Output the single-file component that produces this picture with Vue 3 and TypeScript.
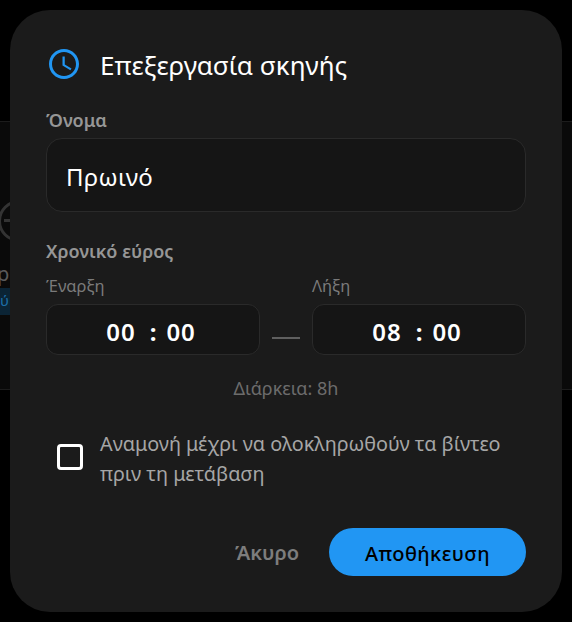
<script setup lang="ts">
const title = 'Επεξεργασία σκηνής'
const times = [
  { label: 'Έναρξη', h: '00', m: '00' },
  { label: 'Λήξη', h: '08', m: '00' }
]
</script>

<template>
  <div class="page">
    <div class="behind">
      <div class="ring"><i class="ring-bar"></i></div>
      <span class="behind-p">p</span>
      <span class="behind-chip">ύ</span>
    </div>
    <div class="modal">
      <div class="header">
        <svg class="clock" viewBox="0 0 24 24" width="36" height="36" fill="#2196f3">
          <path d="M11.99 2C6.47 2 2 6.48 2 12s4.47 10 9.99 10C17.52 22 22 17.52 22 12S17.52 2 11.99 2zM12 20c-4.42 0-8-3.58-8-8s3.58-8 8-8 8 3.58 8 8-3.58 8-8 8z" />
          <path d="M12.5 7H11v6l5.25 3.15.75-1.23-4.5-2.67z" />
        </svg>
        <h1>{{ title }}</h1>
      </div>

      <label class="label name-label">Όνομα</label>
      <div class="input">Πρωινό</div>

      <div class="label range-label">Χρονικό εύρος</div>
      <div class="range">
        <div class="col">
          <div class="sub">{{ times[0].label }}</div>
          <div class="time"><span class="hh">{{ times[0].h }}</span><b>:</b><span>{{ times[0].m }}</span></div>
        </div>
        <div class="dash"></div>
        <div class="col">
          <div class="sub">{{ times[1].label }}</div>
          <div class="time"><span class="hh">{{ times[1].h }}</span><b>:</b><span>{{ times[1].m }}</span></div>
        </div>
      </div>
      <div class="duration">Διάρκεια: 8h</div>

      <div class="check-row">
        <span class="check"></span>
        <span class="check-text">Αναμονή μέχρι να ολοκληρωθούν τα βίντεο πριν τη μετάβαση</span>
      </div>

      <div class="actions">
        <button class="cancel">Άκυρο</button>
        <button class="save">Αποθήκευση</button>
      </div>
    </div>
  </div>
</template>

<style>
html, body { margin: 0; background: #000; }
</style>

<style scoped>
.page {
  position: relative;
  width: 572px;
  height: 622px;
  overflow: hidden;
  background: #000;
  font-family: "Noto Sans", sans-serif;
  padding: 10px;
  box-sizing: border-box;
}
.behind {
  position: absolute;
  left: 0;
  right: 0;
  top: 121px;
  height: 269px;
  background: #0a0a0a;
  border-top: 1px solid #1c1c1c;
  border-bottom: 1px solid #1c1c1c;
  box-sizing: border-box;
}
.ring {
  position: absolute;
  left: -2px;
  top: 78px;
  width: 42px;
  height: 42px;
  box-sizing: border-box;
  border: 3px solid #333;
  border-radius: 50%;
}
.ring-bar {
  position: absolute;
  left: 3px;
  right: 3px;
  top: 16px;
  height: 3px;
  background: #333;
}
.behind-p {
  position: absolute;
  left: -3px;
  top: 138px;
  font-size: 20px;
  color: #5a5a5a;
}
.behind-chip {
  position: absolute;
  left: -20px;
  top: 166px;
  width: 40px;
  height: 27px;
  line-height: 25px;
  text-align: right;
  padding-right: 11px;
  box-sizing: border-box;
  background: #0b2435;
  color: #1c6ea8;
  font-size: 15px;
}
.modal {
  position: relative;
  width: 552px;
  height: 602px;
  box-sizing: border-box;
  background: #1b1b1b;
  border-radius: 40px;
  padding: 36px;
  display: flex;
  flex-direction: column;
}
.header {
  display: flex;
  align-items: center;
  height: 38px;
  gap: 18px;
}
.clock { flex: none; align-self: flex-start; }
h1 {
  margin: 0;
  font-size: 26px;
  font-weight: 400;
  color: #fff;
}
.label {
  font-size: 18px;
  font-weight: 600;
  color: #969696;
  line-height: 22px;
}
.name-label { margin-top: 25px; }
.input {
  margin-top: 7px;
  height: 74px;
  box-sizing: border-box;
  background: #151515;
  border: 1.5px solid #2a2a2a;
  border-radius: 16px;
  padding: 2px 19px 0;
  display: flex;
  align-items: center;
  color: #fff;
  font-size: 24px;
  letter-spacing: 0.3px;
}
.range-label { margin-top: 28px; }
.range {
  display: flex;
  align-items: flex-end;
  margin-top: 14px;
}
.col { width: 214px; }
.sub {
  font-size: 16.5px;
  line-height: 20px;
  color: #7a7a7a;
}
.time {
  margin-top: 8px;
  height: 51px;
  box-sizing: border-box;
  background: #151515;
  border: 1.5px solid #2a2a2a;
  border-radius: 12px;
  padding: 3px 4px 0 0;
  display: flex;
  align-items: center;
  justify-content: center;
  gap: 10px;
  color: #fff;
  font-size: 24px;
  font-weight: 600;
  letter-spacing: 1px;
}
.hh { margin-right: 4px; }
.time b { font-weight: 700; letter-spacing: 0; }
.dash {
  width: 28px;
  height: 2px;
  margin: 0 12px 16px;
  background: #5f5f5f;
}
.duration {
  margin-top: 22px;
  text-align: center;
  font-size: 18px;
  line-height: 22px;
  color: #6c6c6c;
}
.check-row {
  margin-top: 30px;
  padding-left: 11px;
  display: flex;
  align-items: flex-start;
  gap: 17px;
}
.check {
  flex: none;
  width: 26px;
  height: 26px;
  margin-top: 15px;
  box-sizing: border-box;
  border: 3px solid #fff;
  border-radius: 4px;
}
.check-text {
  font-size: 19.8px;
  line-height: 30px;
  color: #a6a6a6;
}
.actions {
  margin-top: auto;
  display: flex;
  justify-content: flex-end;
  align-items: center;
  gap: 30px;
}
button {
  border: 0;
  background: none;
  font-family: inherit;
  font-size: 20px;
  padding: 0;
}
.cancel {
  color: #7d7d7d;
  font-weight: 600;
}
.save {
  width: 197px;
  height: 48px;
  border-radius: 24px;
  background: #2196f3;
  color: #000;
  font-weight: 500;
  letter-spacing: 0.4px;
  padding-top: 2px;
}
</style>
